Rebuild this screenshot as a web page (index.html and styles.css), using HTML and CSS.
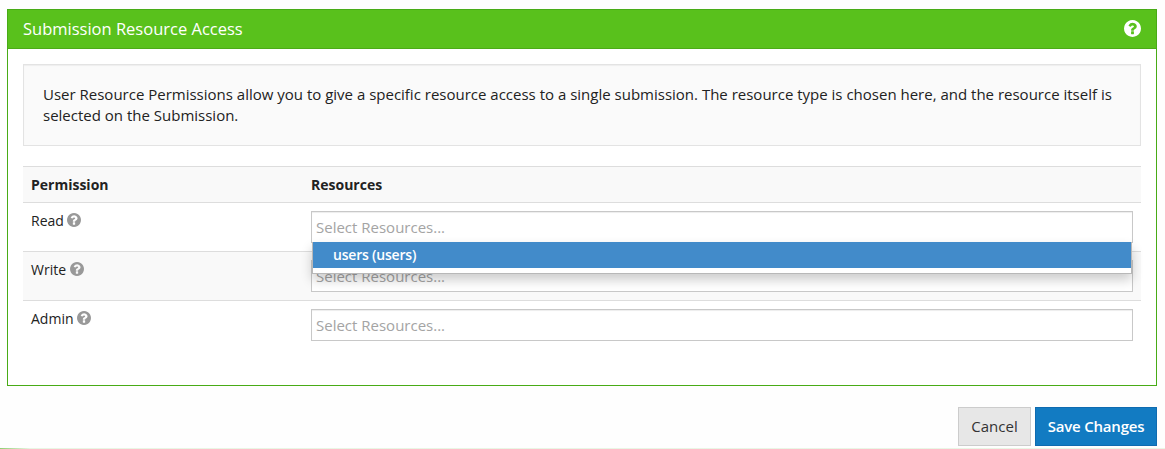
FILE: index.html
```html
<!DOCTYPE html>
<html lang="en">
<head>
<meta charset="utf-8">
<title>Submission Resource Access</title>
<link rel="stylesheet" href="styles.css">
</head>
<body>
<svg class="sprite" aria-hidden="true">
  <symbol id="question" viewBox="0 0 1536 1536">
    <path d="M896 1248v-192q0-14-9-23t-23-9h-192q-14 0-23 9t-9 23v192q0 14 9 23t23 9h192q14 0 23-9t9-23zm256-672q0-88-55.500-163t-138.500-116-170-41q-243 0-371 213-15 24 8 42l132 100q7 6 19 6 16 0 25-12 53-68 86-92 34-24 86-24 48 0 85.500 26t37.500 59q0 38-20 61t-68 45q-63 28-115.500 86.500t-52.500 125.500v36q0 14 9 23t23 9h192q14 0 23-9t9-23q0-19 21.500-49.500t54.500-49.500q32-18 49-28.500t46-35 44.500-48 28-60.500 12.500-81zm384 192q0 209-103 385.500t-279.500 279.500-385.500 103-385.500-103-279.500-279.500-103-385.500 103-385.500 279.500-279.500 385.500-103 385.500 103 279.500 279.500 103 385.500z"/>
  </symbol>
</svg>
<main class="page">
  <section class="panel">
    <header class="panel-heading">
      <h1 class="panel-title">Submission Resource Access</h1>
      <svg class="panel-help"><use href="#question"/></svg>
    </header>
    <div class="panel-body">
      <div class="well">User Resource Permissions allow you to give a specific resource access to a single submission. The resource type is chosen here, and the resource itself is selected on the Submission.</div>
      <div class="table">
        <div class="row row-head"><span>Permission</span><span>Resources</span></div>
        <div class="row">
          <span class="label">Read <svg class="help"><use href="#question"/></svg></span>
          <div class="select">
            <div class="field">Select Resources...</div>
            <div class="menu"><div class="option">users (users)</div></div>
          </div>
        </div>
        <div class="row row-alt">
          <span class="label">Write <svg class="help"><use href="#question"/></svg></span>
          <div class="select"><div class="field">Select Resources...</div></div>
        </div>
        <div class="row">
          <span class="label">Admin <svg class="help"><use href="#question"/></svg></span>
          <div class="select"><div class="field">Select Resources...</div></div>
        </div>
      </div>
    </div>
  </section>
  <div class="actions">
    <button class="btn">Cancel</button>
    <button class="btn btn-primary">Save Changes</button>
  </div>
  <div class="rule"></div>
</main>
</body>
</html>
```
FILE: styles.css
```css
* { box-sizing: border-box; }
body {
  margin: 0;
  background: #fefefe;
  color: #222;
  font: 15px/21px "Open Sans", sans-serif;
  overflow: hidden;
}
.sprite { display: none; }
.page {
  display: flex;
  flex-direction: column;
  height: 449px;
  padding: 9px 8px 0 7px;
}
.panel {
  height: 377px;
  border: 1px solid #48ab16;
  background: #fff;
}
.panel-heading {
  display: flex;
  align-items: center;
  justify-content: space-between;
  height: 39px;
  padding: 0 15px 2px;
  border-bottom: 1px solid #4bab17;
  background: #59c11c;
  color: #fff;
}
.panel-title { margin: 0; font-size: 16.5px; font-weight: 400; }
.panel-help { width: 17px; height: 17px; fill: #fff; }
.panel-body { padding: 15px; }
.well {
  height: 82px;
  padding: 19px;
  border: 1px solid #e3e3e3;
  background: #fafafa;
  box-shadow: inset 0 1px 1px rgba(0, 0, 0, .05);
}
.table { margin-top: 20px; font-size: 14px; line-height: 20px; }
.row {
  display: grid;
  grid-template-columns: 280px 1fr;
  height: 49px;
  padding: 8px;
  border-top: 1px solid #ddd;
}
.row-head { height: 36px; background: #f9f9f9; font-weight: 700; }
.row-alt { background: #f9f9f9; }
.help {
  width: 14px;
  height: 14px;
  fill: #999;
  vertical-align: -1px;
}
.select { position: relative; }
.field {
  height: 32px;
  padding: 5px 4px;
  border: 1px solid #c8c8c8;
  background: #fff;
  box-shadow: inset 0 1px 1px rgba(0, 0, 0, .075);
  color: #a4a4a4;
  font-size: 15px;
}
.menu {
  position: absolute;
  z-index: 1;
  top: 31px;
  left: 1px;
  right: 1px;
  height: 32px;
  border: 1px solid #b8b8b8;
  border-top: 0;
  background: #fff;
  box-shadow: 0 6px 12px rgba(0, 0, 0, .2);
}
.option {
  height: 26px;
  padding: 3px 20px;
  background: #428bca;
  color: #fff;
  font-weight: 600;
  letter-spacing: -.2px;
}
.actions {
  display: flex;
  justify-content: flex-end;
  gap: 4px;
  margin-top: 21px;
}
.btn {
  width: 73px;
  height: 39px;
  padding: 0;
  border: 1px solid #ccc;
  background: #e7e7e7;
  color: #333;
  font: 15px/21px "Open Sans", sans-serif;
}
.btn-primary {
  width: 122px;
  border-color: #0f6bb0;
  background: #127bc2;
  color: #fff;
  font-weight: 600;
  letter-spacing: -.2px;
}
.rule {
  height: 1px;
  margin: auto -8px 0 -7px;
  background: linear-gradient(90deg, #8fcf73, #e9f6e4 30px, #eaf6e6);
}
```
